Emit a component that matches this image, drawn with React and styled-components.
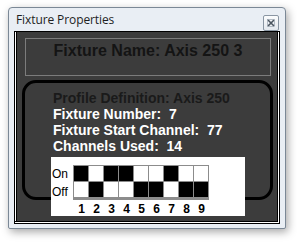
import React from "react";
import styled, { createGlobalStyle } from "styled-components";

const Global = createGlobalStyle`
  html, body { margin: 0; padding: 0; background: #ffffff; }
  body { width: 297px; height: 242px; overflow: hidden; }
`;

const Page = styled.div`
  padding: 7px 11px 13px 8px;
  box-sizing: border-box;
  width: 297px;
  height: 242px;
`;

const Window = styled.div`
  box-sizing: border-box;
  width: 278px;
  height: 222px;
  border: 1px solid #7b8896;
  border-radius: 4px 4px 2px 2px;
  background: #e9eef4;
  box-shadow: 2px 3px 8px rgba(0, 0, 0, 0.35);
  display: flex;
  flex-direction: column;
  padding: 0 5px 4px 5px;
`;

const TitleBar = styled.div`
  height: 23px;
  display: flex;
  align-items: center;
  justify-content: space-between;
  padding: 0 1px 0 2px;
`;

const Title = styled.span`
  font-family: "Open Sans", "Noto Sans", sans-serif;
  font-size: 12px;
  color: #1e1e1e;
  letter-spacing: -0.1px;
`;

const CloseButton = styled.div`
  width: 14px;
  height: 14px;
  border: 1px solid #8a96a3;
  border-radius: 2px;
  background: linear-gradient(#fbfcfd, #e3e8ee);
  display: flex;
  align-items: center;
  justify-content: center;
  margin-top: 6px;
`;

const Panel = styled.div`
  flex: 1;
  border: 1px solid #000;
  box-shadow: inset -1px -1px 0 #fff, inset -2px -2px 0 #000, inset 1px 0 0 #fff, inset 2px 0 0 #000;
  background: #3c3c3c;
  padding: 6px 8px 0 10px;
  display: flex;
  flex-direction: column;
`;

const NameBox = styled.div`
  height: 38px;
  box-sizing: border-box;
  border: 1px solid #7c7c7c;
  text-align: center;
  font-family: "Liberation Sans", Arial, sans-serif;
  font-weight: bold;
  font-size: 16px;
  color: #141414;
  padding-top: 3px;
`;

const RoundBox = styled.div`
  margin: 4px 0 0 -3px;
  width: 251px;
  height: 120px;
  box-sizing: border-box;
  border: 3px solid #000;
  border-radius: 14px;
  padding: 7px 0 0 28px;
  font-family: "Liberation Sans", Arial, sans-serif;
  font-weight: bold;
  font-size: 14px;
  line-height: 16px;
`;

const Line = styled.div`
  color: ${(p) => (p.$dark ? "#1a1a1a" : "#ffffff")};
  white-space: pre;
`;

const DipBox = styled.div`
  position: relative;
  margin: 3px 0 0 -2px;
  width: 194px;
  height: 59px;
  background: #fff;
  display: grid;
  grid-template-columns: 22px auto;
  grid-template-rows: auto auto;
  padding-top: 8px;
  box-sizing: border-box;
`;

const Labels = styled.div`
  display: flex;
  flex-direction: column;
  font-family: "Liberation Sans", Arial, sans-serif;
  font-weight: normal;
  font-size: 12px;
  color: #000;
  padding-left: 1px;
`;

const Label = styled.div`
  height: 16px;
  line-height: 16px;
  margin-top: ${(p) => p.$offset || 0}px;
`;

const Grid = styled.div`
  display: grid;
  grid-template-columns: repeat(9, 14px);
  grid-auto-rows: 15px;
  gap: 1px;
  padding: 1px;
  background: #8c8c8c;
  width: max-content;
`;

const Cell = styled.div`
  background: ${(p) => (p.$on ? "#000" : "#fff")};
`;

const Numbers = styled.div`
  grid-column: 2;
  display: grid;
  grid-template-columns: repeat(9, 15px);
  padding-left: 1px;
  font-family: "Liberation Sans", Arial, sans-serif;
  font-weight: bold;
  font-size: 12px;
  line-height: 18px;
  color: #000;
  text-align: center;
`;

const pattern = [1, 0, 1, 1, 0, 0, 1, 0, 0];

export default function App() {
  return (
    <>
      <Global />
      <Page>
        <Window>
          <TitleBar>
            <Title>Fixture Properties</Title>
            <CloseButton>
              <svg width="8" height="8" viewBox="0 0 8 8">
                <path d="M1 1 L7 7 M7 1 L1 7" stroke="#4a5560" strokeWidth="1.6" />
                <rect x="0.5" y="0.5" width="7" height="7" fill="none" stroke="#8a96a3" strokeWidth="0.6" />
              </svg>
            </CloseButton>
          </TitleBar>
          <Panel>
            <NameBox>Fixture Name: Axis 250 3</NameBox>
            <RoundBox>
              <Line $dark>Profile Definition: Axis 250</Line>
              <Line>{"Fixture Number:  7"}</Line>
              <Line>{"Fixture Start Channel:  77"}</Line>
              <Line>{"Channels Used:  14"}</Line>
              <DipBox>
                <Labels>
                  <Label $offset={1}>On</Label>
                  <Label $offset={2}>Off</Label>
                </Labels>
                <Grid>
                  {pattern.map((v, i) => (
                    <Cell key={"a" + i} $on={v === 1} />
                  ))}
                  {pattern.map((v, i) => (
                    <Cell key={"b" + i} $on={v === 0} />
                  ))}
                </Grid>
                <Numbers>
                  {pattern.map((_, i) => (
                    <span key={i}>{i + 1}</span>
                  ))}
                </Numbers>
              </DipBox>
            </RoundBox>
          </Panel>
        </Window>
      </Page>
    </>
  );
}
